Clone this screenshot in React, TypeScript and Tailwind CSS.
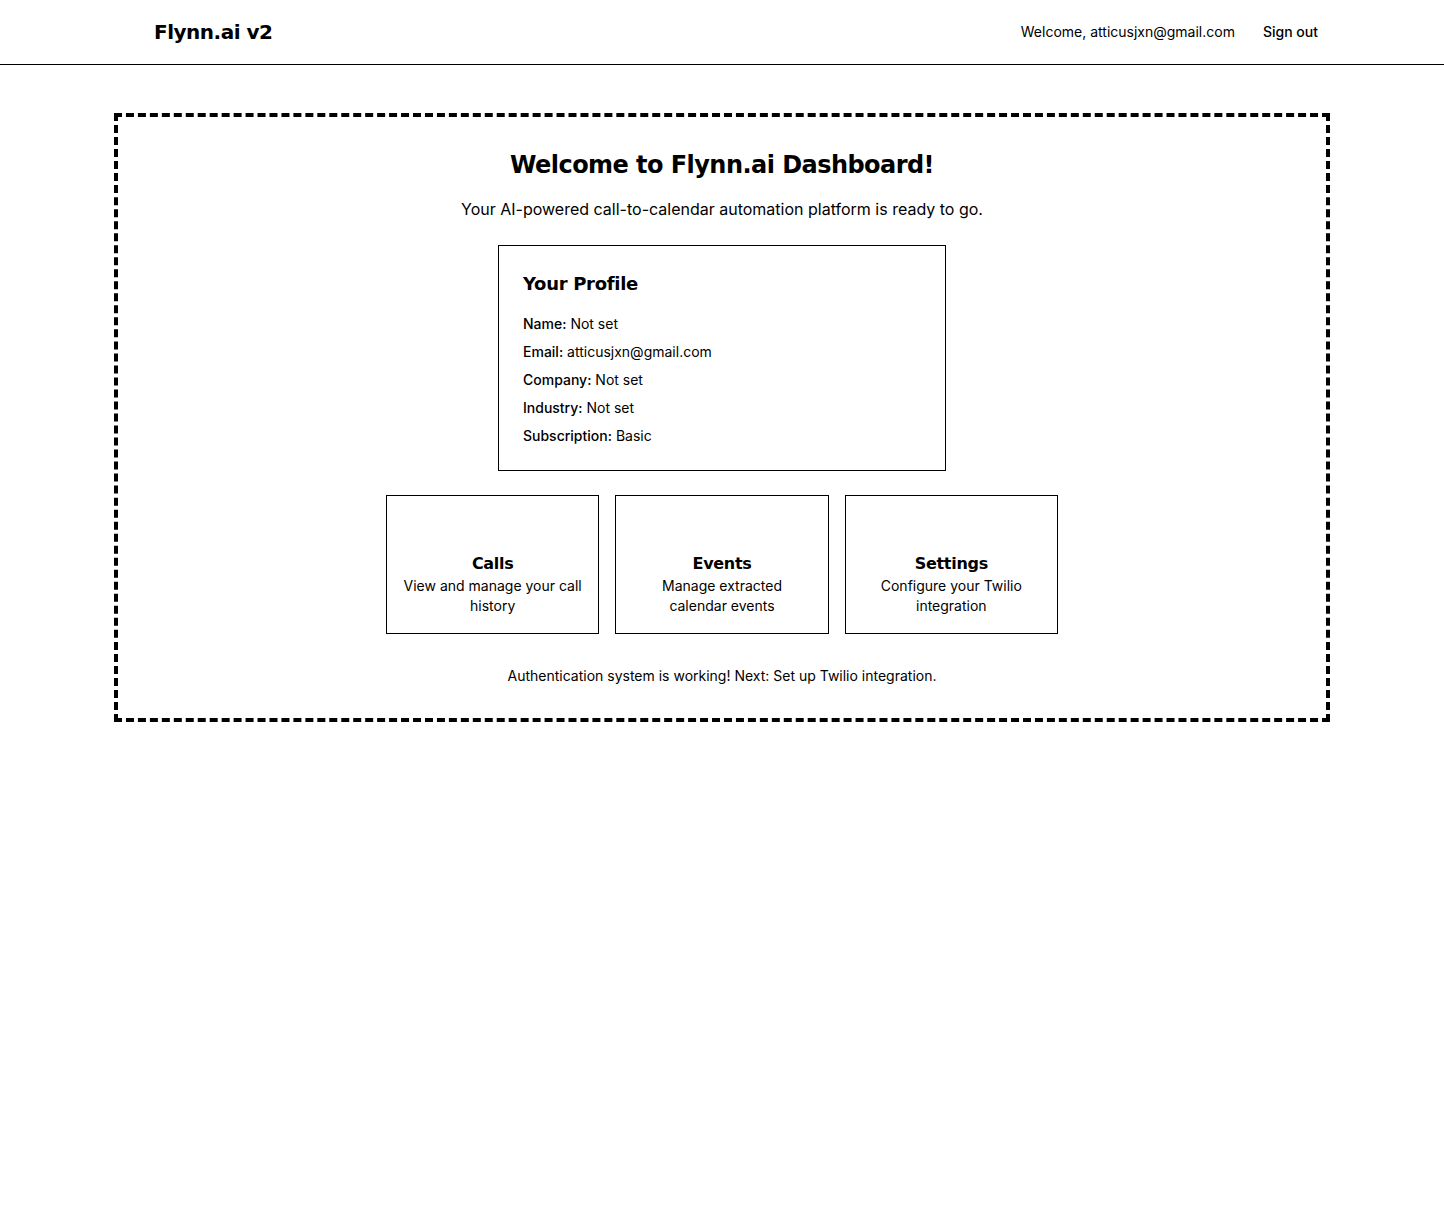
export default function App() {
  const profile = [
    { label: 'Name:', value: 'Not set' },
    { label: 'Email:', value: 'atticusjxn@gmail.com' },
    { label: 'Company:', value: 'Not set' },
    { label: 'Industry:', value: 'Not set' },
    { label: 'Subscription:', value: 'Basic' },
  ];

  const cards = [
    { title: 'Calls', text: 'View and manage your call history' },
    { title: 'Events', text: 'Manage extracted calendar events' },
    { title: 'Settings', text: 'Configure your Twilio integration' },
  ];

  const heading = "font-['DejaVu_Sans',sans-serif] font-bold text-black";

  return (
    <div className="min-h-screen bg-white font-['Inter',sans-serif] text-black">
      {/* Header */}
      <header className="border-b border-black">
        <div className="mx-auto flex h-16 max-w-7xl items-center justify-between px-8">
          <h1 className={`${heading} pl-10 text-[20px] tracking-[-0.5px]`}>Flynn.ai v2</h1>
          <div className="flex items-center gap-4">
            <span className="text-sm">Welcome, atticusjxn@gmail.com</span>
            <button className="px-3 py-2 text-sm font-medium">Sign out</button>
          </div>
        </div>
      </header>

      {/* Main */}
      <main className="mx-auto max-w-7xl px-8 py-12">
        <div className="flex flex-col items-center border-4 border-dashed border-black p-8 text-center">
          <h2 className={`${heading} text-2xl leading-8 tracking-[-0.55px]`}>
            Welcome to Flynn.ai Dashboard!
          </h2>
          <p className="mt-4 text-base leading-6">
            Your AI-powered call-to-calendar automation platform is ready to go.
          </p>

          <div className="mt-6 w-full max-w-md border border-black p-6 text-left">
            <h3 className={`${heading} mb-4 text-lg leading-7 tracking-[-0.3px]`}>Your Profile</h3>
            <div className="flex flex-col gap-2 text-sm">
              {profile.map((p) => (
                <p key={p.label}>
                  <span className="font-medium">{p.label}</span> {p.value}
                </p>
              ))}
            </div>
          </div>

          <div className="mt-6 grid w-full max-w-2xl grid-cols-3 gap-4">
            {cards.map((c) => (
              <div key={c.title} className="border border-black px-4 pt-4 pb-[17px]">
                <div className="mb-2 h-8" />
                <h4 className={`${heading} text-base leading-6 tracking-[-0.3px]`}>{c.title}</h4>
                <p className="text-sm">{c.text}</p>
              </div>
            ))}
          </div>

          <p className="mt-8 text-sm">
            Authentication system is working! Next: Set up Twilio integration.
          </p>
        </div>
      </main>
    </div>
  );
}
